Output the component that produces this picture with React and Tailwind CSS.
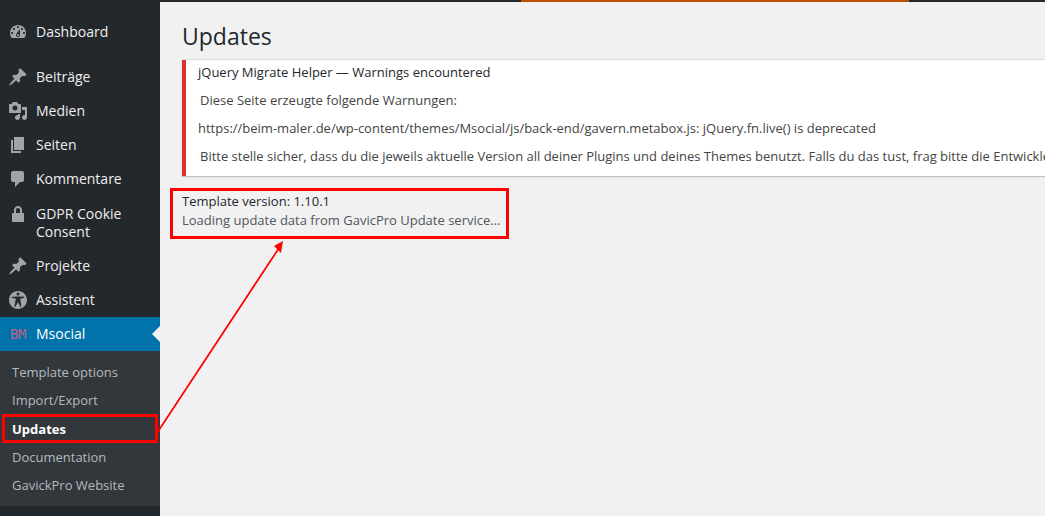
// App.jsx
const ICONS = {
  dashboard:
    "M3.76 16h12.48c1.1-1.37 1.76-3.11 1.76-5 0-4.42-3.58-8-8-8s-8 3.58-8 8c0 1.89.66 3.63 1.76 5zM10 4c.55 0 1 .45 1 1s-.45 1-1 1-1-.45-1-1 .45-1 1-1zM6 6c.55 0 1 .45 1 1s-.45 1-1 1-1-.45-1-1 .45-1 1-1zm8 0c.55 0 1 .45 1 1s-.45 1-1 1-1-.45-1-1 .45-1 1-1zm-5.37 5.55L12 7v6c0 1.1-.9 2-2 2s-2-.9-2-2c0-.57.24-1.08.63-1.45zM4 10c.55 0 1 .45 1 1s-.45 1-1 1-1-.45-1-1 .45-1 1-1zm12 0c.55 0 1 .45 1 1s-.45 1-1 1-1-.45-1-1 .45-1 1-1zm-5 3c0-.55-.45-1-1-1s-1 .45-1 1 .45 1 1 1 1-.45 1-1z",
  pin: "M10.44 3.02l1.82-1.82 6.36 6.35-1.83 1.82c-1.05-.68-2.48-.57-3.41.36l-.75.75c-.92.93-1.04 2.35-.35 3.41l-1.83 1.82-2.41-2.41-2.8 2.79c-.42.42-3.38 2.71-3.8 2.29s1.86-3.39 2.28-3.81l2.79-2.79L4.1 9.36l1.83-1.82c1.05.69 2.48.57 3.4-.36l.75-.75c.93-.92 1.05-2.35.36-3.41z",
  media:
    "M13 11V4c0-.55-.45-1-1-1h-1.67L9 1H5L3.67 3H2c-.55 0-1 .45-1 1v7c0 .55.45 1 1 1h10c.55 0 1-.45 1-1zM7 4.5c1.38 0 2.5 1.12 2.5 2.5S8.38 9.5 7 9.5 4.5 8.38 4.5 7 5.62 4.5 7 4.5zM14 6h5v10.5c0 1.38-1.12 2.5-2.5 2.5S14 17.88 14 16.5s1.12-2.5 2.5-2.5c.17 0 .34.02.5.05V9h-3V6zm-4 8.05V13h2v3.5c0 1.38-1.12 2.5-2.5 2.5S7 17.88 7 16.5 8.12 14 9.5 14c.17 0 .34.02.5.05z",
  page: "M6 15V2h10v13H6zm-1 1h8v2H3V5h2v11z",
  comment:
    "M5 2h9c1.1 0 2 .9 2 2v7c0 1.1-.9 2-2 2h-2l-5 5v-5H5c-1.1 0-2-.9-2-2V4c0-1.1.9-2 2-2z",
  lock: "M14 9h1c.55 0 1 .45 1 1v7c0 .55-.45 1-1 1H5c-.55 0-1-.45-1-1v-7c0-.55.45-1 1-1h1V6c0-2.21 1.79-4 4-4s4 1.79 4 4v3zm-2 0V6c0-1.1-.9-2-2-2s-2 .9-2 2v3h4z",
  access:
    "M19 10c0-4.97-4.03-9-9-9s-9 4.03-9 9 4.03 9 9 9 9-4.03 9-9zm-9-7.4c.83 0 1.5.67 1.5 1.5s-.67 1.51-1.5 1.51c-.82 0-1.5-.68-1.5-1.51s.68-1.5 1.5-1.5zM3.4 7.36c0-.65 6.6-.76 6.6-.76s6.6.11 6.6.76-4.47 1.4-4.47 1.4 1.69 8.14 1.06 8.38c-.62.24-3.19-5.19-3.19-5.19s-2.56 5.43-3.19 5.19c-.63-.24 1.06-8.38 1.06-8.38S3.4 8.01 3.4 7.36z",
};

function MenuIcon({ name }) {
  return (
    <svg viewBox="0 0 20 20" className="w-5 h-5 -my-px shrink-0 fill-[#a0a5aa]">
      <path fillRule="evenodd" d={ICONS[name]} />
    </svg>
  );
}

function MenuItem({ icon, children, className = "pt-2" }) {
  return (
    <li className={`flex items-start pl-2 pb-2 text-[14px] leading-[18px] text-[#eeeeee] ${className}`}>
      <MenuIcon name={icon} />
      <span className="ml-2">{children}</span>
    </li>
  );
}

function SubItem({ children, current }) {
  return (
    <li
      className={`pl-3 text-[13px] leading-[18.2px] ${
        current ? "pt-[6px] pb-[4px] font-bold text-white" : "py-[5px] text-[#b4b9be]"
      }`}
    >
      {children}
    </li>
  );
}

export default function App() {
  return (
    <div className="relative flex h-[516px] w-[1045px] overflow-hidden bg-[#f1f1f1] font-['Open_Sans',sans-serif]">
      {/* Sidebar */}
      <aside className="w-[160px] shrink-0 bg-[#23282d] pt-[15px]">
        <ul className="mb-[11px]">
          <MenuItem icon="dashboard">Dashboard</MenuItem>
        </ul>
        <ul>
          <MenuItem icon="pin">Beiträge</MenuItem>
          <MenuItem icon="media">Medien</MenuItem>
          <MenuItem icon="page">Seiten</MenuItem>
          <MenuItem icon="comment">Kommentare</MenuItem>
          <MenuItem icon="lock" className="pt-[9px]">
            GDPR Cookie
            <br />
            Consent
          </MenuItem>
          <MenuItem icon="pin">Projekte</MenuItem>
          <MenuItem icon="access">Assistent</MenuItem>
          <li className="relative flex items-start pl-2 pt-2 pb-2 text-[14px] leading-[18px] text-white bg-[#0073aa]">
            <span className="w-5 h-[18px] shrink-0 pl-[2px] whitespace-nowrap font-['DejaVu_Sans_Mono',monospace] text-[14px] leading-[18px] tracking-[-0.4px] text-[#b8648f]">
              BM
            </span>
            <span className="ml-2">Msocial</span>
            <span className="absolute right-0 top-[9px] border-y-[8px] border-r-[8px] border-y-transparent border-r-[#f1f1f1]" />
          </li>
        </ul>
        <ul className="bg-[#32373c] py-[7px]">
          <SubItem>Template options</SubItem>
          <SubItem>Import/Export</SubItem>
          <SubItem current>Updates</SubItem>
          <SubItem>Documentation</SubItem>
          <SubItem>GavickPro Website</SubItem>
        </ul>
      </aside>

      {/* Content */}
      <main className="flex-1 min-w-0">
        <div className="flex h-[2px] bg-[#23282d]">
          <div className="ml-[361px] w-[388px] bg-[#c14f00]" />
        </div>
        <div className="pl-[22px]">
          <h1 className="mt-[20px] text-[23px] leading-[29px] text-[#23282d]">
            Updates
          </h1>
          <div className="mt-[9px] h-[116px] border-l-4 border-[#dc3232] bg-white pl-[12px] shadow-[0_1px_1px_rgba(0,0,0,0.2),0_-1px_1px_rgba(0,0,0,0.08)] whitespace-nowrap text-[13px] text-[#444444]">
            <p className="pt-[3px] leading-[19px] text-[#23282d]">
              jQuery Migrate Helper — Warnings encountered
            </p>
            <p className="mt-[9px] pl-[2px] leading-[19px]">
              Diese Seite erzeugte folgende Warnungen:
            </p>
            <p className="mt-[9px] leading-[19px]">
              https://beim-maler.de/wp-content/themes/Msocial/js/back-end/gavern.metabox.js: jQuery.fn.live() is deprecated
            </p>
            <p className="mt-[9px] pl-[2px] leading-[19px]">
              Bitte stelle sicher, dass du die jeweils aktuelle Version all deiner Plugins und deines Themes benutzt. Falls du das tust, frag bitte die Entwickler
            </p>
          </div>
          <p className="mt-[16px] text-[13px] leading-[19px] text-[#23282d]">
            Template version: 1.10.1
          </p>
          <p className="text-[13px] leading-[19px] text-[#50575e]">
            Loading update data from GavicPro Update service...
          </p>
        </div>
      </main>

      {/* Annotations */}
      <div className="absolute left-[2px] top-[414px] w-[156px] h-[29px] border-[3px] border-[#ff0000]" />
      <div className="absolute left-[170px] top-[188px] w-[339px] h-[51px] border-[3px] border-[#ff0000]" />
      <svg className="absolute left-0 top-0 w-[1045px] h-[516px] pointer-events-none" viewBox="0 0 1045 516">
        <line x1="157" y1="433" x2="279" y2="248" stroke="#ff0000" strokeWidth="1.7" />
        <polygon points="283,241 274,246 281,253" fill="#ff0000" />
      </svg>
    </div>
  );
}
